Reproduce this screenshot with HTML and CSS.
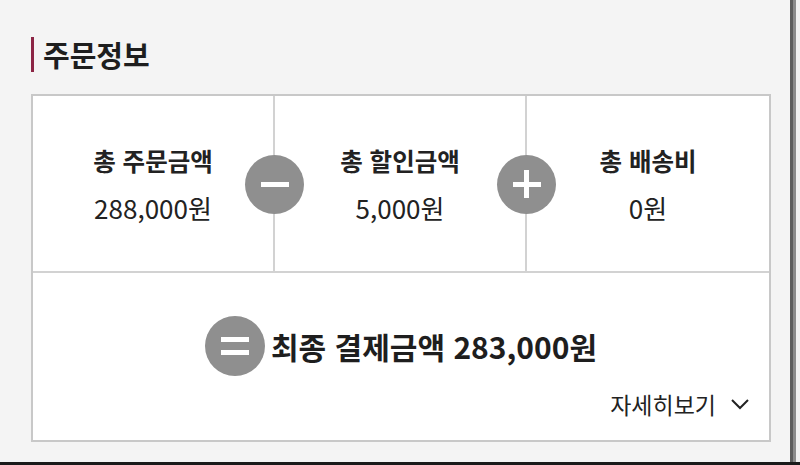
FILE: index.html
```html
<!DOCTYPE html>
<html lang="ko">
<head>
<meta charset="utf-8">
<link rel="stylesheet" href="styles.css">
</head>
<body>
<div class="page">
  <div class="top">
    <main class="main">
      <h2 class="title">주문정보</h2>
      <section class="box">
        <div class="summary">
          <div class="cell">
            <div class="label">총 주문금액</div>
            <div class="value">288,000원</div>
            <span class="op op-minus"><span class="bar"></span></span>
          </div>
          <div class="cell">
            <div class="label">총 할인금액</div>
            <div class="value">5,000원</div>
            <span class="op op-plus"><span class="bar"></span><span class="bar vert"></span></span>
          </div>
          <div class="cell">
            <div class="label">총 배송비</div>
            <div class="value">0원</div>
          </div>
        </div>
        <div class="final">
          <div class="total">
            <span class="eq"><span class="bar"></span><span class="bar"></span></span>
            <span class="total-text">최종 결제금액 283,000원</span>
          </div>
          <div class="more">
            <span>자세히보기</span>
            <svg class="chev" width="20" height="12" viewBox="0 0 20 12"><polyline points="2,2 10,10 18,2" fill="none" stroke="#222" stroke-width="2"/></svg>
          </div>
        </div>
      </section>
    </main>
    <div class="edge"></div>
    <div class="edge2"></div>
  </div>
  <div class="bottom-line"></div>
</div>
</body>
</html>
```
FILE: styles.css
```css
html, body {
  margin: 0;
  padding: 0;
}
body {
  background: #f4f4f4;
  font-family: "Noto Sans CJK KR", "Noto Sans", sans-serif;
  color: #222;
  width: 800px;
  height: 465px;
  overflow: hidden;
}
.page {
  display: flex;
  flex-direction: column;
  height: 465px;
}
.top {
  display: flex;
  height: 462px;
}
.main {
  width: 790px;
  padding: 37px 0 0 31px;
  box-sizing: border-box;
}
.edge {
  width: 6px;
  background: linear-gradient(to right, #5c5c5c 0 3px, #8a8a8a 3px 6px);
}
.edge2 {
  flex: 1;
  background: #f0f0f0;
}
.bottom-line {
  height: 3px;
  background: #1a1a1a;
}
.title {
  margin: 0;
  height: 35px;
  border-left: 3px solid #8c2545;
  padding-left: 9px;
  font-size: 29px;
  font-weight: 700;
  line-height: 35px;
  color: #1e1e1e;
}
.box {
  margin-top: 22px;
  width: 740px;
  height: 348px;
  box-sizing: border-box;
  border: 2px solid #c8c8c8;
  background: #fff;
  display: flex;
  flex-direction: column;
}
.summary {
  display: grid;
  grid-template-columns: 242px 252px 1fr;
  height: 175px;
  border-bottom: 2px solid #d2d2d2;
}
.cell {
  position: relative;
  display: flex;
  flex-direction: column;
  align-items: center;
  justify-content: center;
  border-right: 2px solid #d2d2d2;
}
.cell:last-child {
  border-right: none;
}
.label {
  font-size: 24.5px;
  font-weight: 700;
  line-height: 47px;
}
.value {
  font-size: 26px;
  font-weight: 400;
  line-height: 47px;
}
.op {
  position: absolute;
  right: -31px;
  top: 50%;
  margin-top: -29px;
  width: 59px;
  height: 59px;
  border-radius: 50%;
  background: #8f8f8f;
  display: flex;
  align-items: center;
  justify-content: center;
  z-index: 1;
}
.bar {
  display: block;
  width: 28px;
  height: 5px;
  background: #fff;
}
.op-plus .bar {
  position: absolute;
}
.op-plus .vert {
  width: 5px;
  height: 28px;
}
.final {
  flex: 1;
  display: flex;
  flex-direction: column;
  padding-top: 43px;
}
.total {
  display: flex;
  align-items: center;
  justify-content: center;
  gap: 6px;
  height: 60px;
}
.eq {
  width: 60px;
  height: 60px;
  border-radius: 50%;
  background: #8f8f8f;
  display: flex;
  flex-direction: column;
  align-items: center;
  justify-content: center;
  gap: 8px;
}
.total-text {
  font-size: 30px;
  font-weight: 700;
  color: #1e1e1e;
}
.more {
  margin-top: 13px;
  padding-right: 19px;
  display: flex;
  justify-content: flex-end;
  align-items: center;
  gap: 14px;
  font-size: 23px;
  line-height: 30px;
}
.chev {
  display: block;
}
```
